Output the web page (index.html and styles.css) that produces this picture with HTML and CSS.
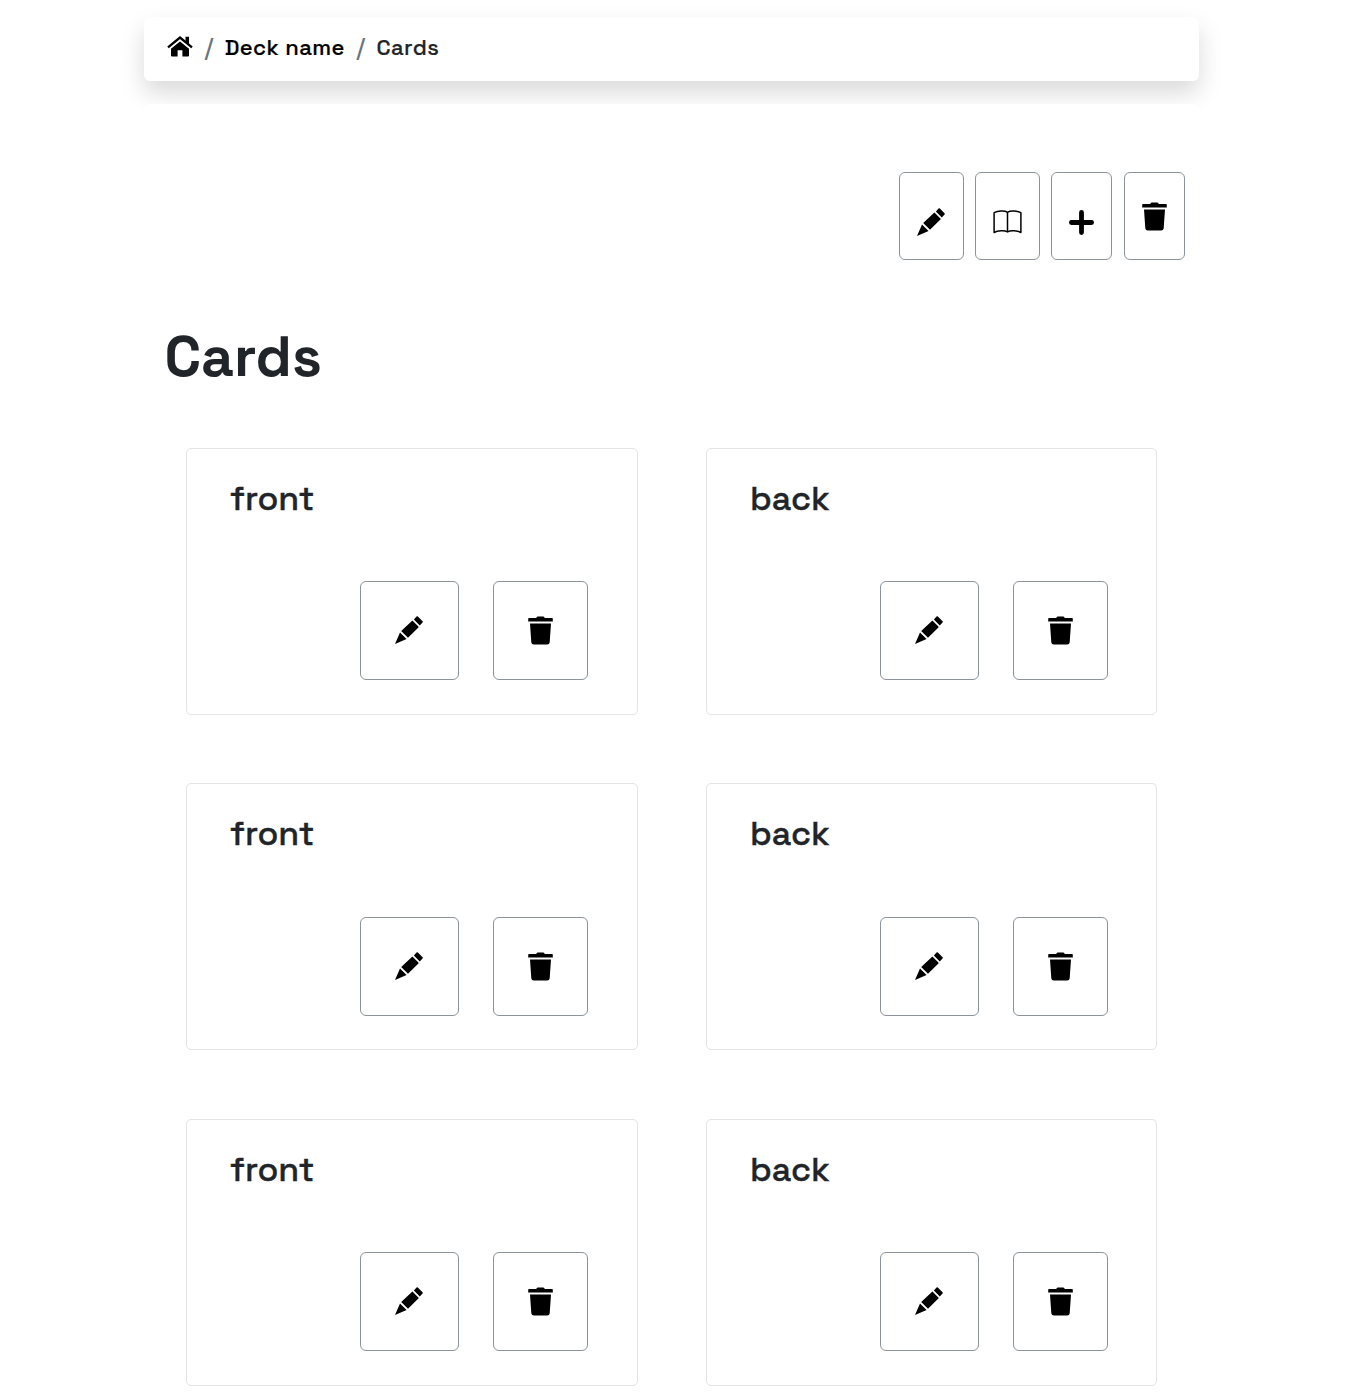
FILE: index.html
```html
<!DOCTYPE html>
<html lang="en">
<head>
<meta charset="utf-8">
<title>Cards</title>
<link rel="stylesheet" href="styles.css">
</head>
<body>
<svg class="sprite" aria-hidden="true">
  <symbol id="pencil" viewBox="0 0 28 28"><path d="M21.5 .6 Q22.2 0 22.9 .6 L27.5 5.2 Q28.2 5.9 27.5 6.6 L24.8 9.4 L18.9 3.6Z M17.4 4.5 L23.9 11 L13 21.8 L6.2 15.1Z M5 16.5 L11.6 23.1 L0 28Z"/></symbol>
  <symbol id="trash" viewBox="0 0 25 29"><path d="M8.2 2 L9 .8 Q9.5 .4 10 .4 H15 Q15.5 .4 16 .8 L16.8 2 H24 Q24.8 2 24.8 2.8 V5.6 H.2 V2.8 Q.2 2 1 2Z M2 7.4 H23 L21.7 26.2 Q21.5 28.6 19.2 28.6 H5.8 Q3.5 28.6 3.3 26.2Z"/></symbol>
  <symbol id="plus" viewBox="0 0 25 25"><path d="M12.5 2.4V22.6M2.4 12.5H22.6" fill="none" stroke="#000" stroke-width="4.8" stroke-linecap="round"/></symbol>
  <symbol id="book" viewBox="0 0 29 24"><path d="M14.5 2.3V22M14.5 2.3C11.5.2 4.5 1 1.1 2.6V22.5C4.5 20.8 11.5 20 14.5 22C17.5 20 24.5 20.8 27.9 22.5V2.6C24.5 1 17.5.2 14.5 2.3Z" fill="none" stroke="#000" stroke-width="1.5" stroke-linejoin="round"/></symbol>
  <symbol id="home" viewBox="0 0 26 21"><path d="M1 11.4 L13 1.5 L25 11.4" fill="none" stroke="#000" stroke-width="2.3"/><path d="M18.5 .8H22V9L18.5 6Z M13 5.4L22 12.8V19.4Q22 20.4 21 20.4H15.4V14.3H10.6V20.4H5Q4 20.4 4 19.4V12.8Z"/></symbol>
</svg>
<nav class="breadcrumb">
  <a class="home"><svg><use href="#home"/></svg></a>
  <span class="slash">/</span>
  <a class="deck">Deck name</a>
  <span class="slash">/</span>
  <span class="current">Cards</span>
</nav>
<main class="content">
  <div class="toolbar">
    <button class="button wide"><svg class="pencil"><use href="#pencil"/></svg></button>
    <button class="button wide"><svg class="book"><use href="#book"/></svg></button>
    <button class="button narrow"><svg class="plus"><use href="#plus"/></svg></button>
    <button class="button narrow raised"><svg class="trash"><use href="#trash"/></svg></button>
  </div>
  <h1>Cards</h1>
  <section class="cards">
    <article class="card"><h2>front</h2><div class="actions"><button class="button edit"><svg class="pencil"><use href="#pencil"/></svg></button><button class="button delete"><svg class="trash"><use href="#trash"/></svg></button></div></article>
    <article class="card"><h2>back</h2><div class="actions"><button class="button edit"><svg class="pencil"><use href="#pencil"/></svg></button><button class="button delete"><svg class="trash"><use href="#trash"/></svg></button></div></article>
    <article class="card"><h2>front</h2><div class="actions"><button class="button edit"><svg class="pencil"><use href="#pencil"/></svg></button><button class="button delete"><svg class="trash"><use href="#trash"/></svg></button></div></article>
    <article class="card"><h2>back</h2><div class="actions"><button class="button edit"><svg class="pencil"><use href="#pencil"/></svg></button><button class="button delete"><svg class="trash"><use href="#trash"/></svg></button></div></article>
    <article class="card"><h2>front</h2><div class="actions"><button class="button edit"><svg class="pencil"><use href="#pencil"/></svg></button><button class="button delete"><svg class="trash"><use href="#trash"/></svg></button></div></article>
    <article class="card"><h2>back</h2><div class="actions"><button class="button edit"><svg class="pencil"><use href="#pencil"/></svg></button><button class="button delete"><svg class="trash"><use href="#trash"/></svg></button></div></article>
  </section>
</main>
</body>
</html>
```
FILE: styles.css
```css
* { box-sizing: border-box; }
body {
  margin: 0;
  padding: 17px 148px 0 144.4px;
  background: #fff;
  color: #212529;
  font-family: "Space Grotesk", Inter, sans-serif;
}
.sprite { display: none; }
svg { display: block; flex: none; }
.breadcrumb {
  display: flex;
  height: 64px;
  padding: 16px 23px;
  background: #fff;
  border-radius: 6px;
  box-shadow: 0 12px 24px rgba(0, 0, 0, .15);
  font-size: 22px;
  line-height: 29px;
  font-weight: 500;
}
.home svg { width: 26px; height: 21px; margin-top: 3px; }
.slash { width: 31.3px; text-align: center; color: #6c757d; font-size: 22.5px; line-height: 30px; }
.deck { width: 120.5px; color: #000; letter-spacing: .45px; white-space: nowrap; -webkit-text-stroke: .2px; }
.current { letter-spacing: .4px; -webkit-text-stroke: .2px; }
.content {
  position: relative;
  margin-top: 23px;
  padding: 68px 14px 11px 20px;
  background: #fff;
  border-radius: 6px;
}
.toolbar { display: flex; justify-content: flex-end; gap: 11.2px; }
.button {
  display: flex;
  justify-content: center;
  align-items: center;
  margin: 0;
  padding: 0;
  border: 1px solid #8c939a;
  border-radius: 6px;
  background: #fff;
}
.toolbar .button { height: 88px; padding-top: 11px; }
.toolbar .narrow { padding-top: 12px; }
.toolbar .raised { padding-top: 0; }
.wide { width: 65px; }
.narrow { width: 61.4px; }
.pencil { width: 28px; height: 28px; }
.trash { width: 25px; height: 29px; }
.plus { width: 25px; height: 25px; }
.book { width: 29px; height: 24px; }
h1 { margin: 61px 0 0; font-size: 57px; line-height: 72px; font-weight: 650; }
.cards {
  display: grid;
  grid-template-columns: 452px 451.5px;
  column-gap: 67.9px;
  row-gap: 68.4px;
  padding: 55px 0 0 21.6px;
}
.card {
  height: 267px;
  padding: 30px 48.6px 0 43px;
  border: 1px solid #e3e4e5;
  border-radius: 5px;
}
h2 { margin: 0; font-size: 34px; line-height: 39px; font-weight: 500; -webkit-text-stroke: .35px; }
.actions { display: flex; justify-content: flex-end; gap: 34px; margin-top: 63.4px; }
.actions .button { height: 99px; }
.actions .edit { width: 99px; padding: 0 .6px 1px 0; }
.delete { width: 95.2px; }
```
